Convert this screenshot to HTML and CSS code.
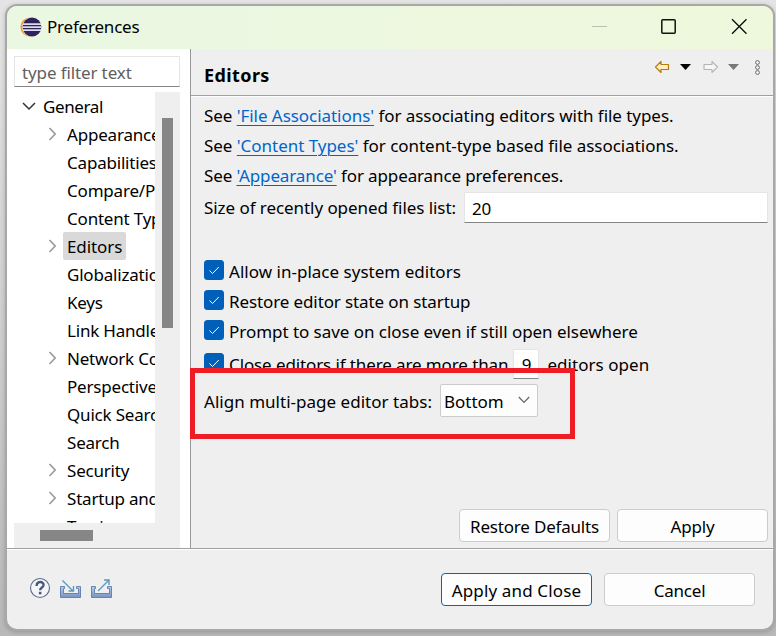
FILE: index.html
```html
<!DOCTYPE html>
<html lang="en">
<head>
<meta charset="utf-8">
<title>Preferences</title>
<link rel="stylesheet" href="styles.css">
</head>
<body>
<div class="window">
  <header class="titlebar">
    <svg class="logo" width="22" height="22" viewBox="0 0 22 22"><circle cx="10" cy="11" r="9.6" fill="#f09a35"/><circle cx="12" cy="11" r="9.9" fill="#ecf8e0"/><circle cx="12" cy="11" r="9.4" fill="#30235b"/><path d="M3 8.1h18M2.6 11.1h18.8M3 14.1h18" stroke="#dcdcec" stroke-width="1.6"/></svg>
    <span class="title">Preferences</span>
    <svg class="controls" width="160" height="20" viewBox="0 0 160 20"><path d="M2 9.5h15" stroke="#b8c2b0"/><rect x="71.8" y="2.8" width="13.4" height="13.4" rx="1" fill="none" stroke="#111" stroke-width="1.5"/><path d="M142 2.3l14.5 14.5M156.500 2.300l-14.500 14.500" stroke="#111" stroke-width="1.4"/></svg>
  </header>
  <div class="main">
    <aside class="sidebar">
      <div class="filter">type filter text</div>
      <div class="tree">
        <ul class="items">
          <li class="root"><svg width="14" height="10" viewBox="0 0 14 10"><path d="M1 2l6 6 6-6" fill="none" stroke="#333" stroke-width="1.5"/></svg><span class="label">General</span></li>
          <li><svg width="9" height="14" viewBox="0 0 9 14"><path d="M1.500 1l5.700 6-5.700 6" fill="none" stroke="#999" stroke-width="1.600"/></svg><span class="label">Appearance</span></li>
          <li><span class="label">Capabilities</span></li>
          <li><span class="label">Compare/Patch</span></li>
          <li><span class="label">Content Types</span></li>
          <li><svg width="9" height="14" viewBox="0 0 9 14"><path d="M1.500 1l5.700 6-5.700 6" fill="none" stroke="#999" stroke-width="1.600"/></svg><span class="label selected">Editors</span></li>
          <li><span class="label">Globalization</span></li>
          <li><span class="label">Keys</span></li>
          <li><span class="label">Link Handlers</span></li>
          <li><svg width="9" height="14" viewBox="0 0 9 14"><path d="M1.500 1l5.700 6-5.700 6" fill="none" stroke="#999" stroke-width="1.600"/></svg><span class="label">Network Connections</span></li>
          <li><span class="label">Perspectives</span></li>
          <li><span class="label">Quick Search</span></li>
          <li><span class="label">Search</span></li>
          <li><svg width="9" height="14" viewBox="0 0 9 14"><path d="M1.500 1l5.700 6-5.700 6" fill="none" stroke="#999" stroke-width="1.600"/></svg><span class="label">Security</span></li>
          <li><svg width="9" height="14" viewBox="0 0 9 14"><path d="M1.500 1l5.700 6-5.700 6" fill="none" stroke="#999" stroke-width="1.600"/></svg><span class="label">Startup and Shutdown</span></li>
          <li><span class="label">Tracing</span></li>
        </ul>
        <div class="vtrack"><div class="vthumb"></div></div>
        <div class="htrack"><div class="hthumb"></div></div>
      </div>
    </aside>
    <section class="page">
      <div class="pagehead">
        <h1>Editors</h1>
        <svg width="110" height="18" viewBox="0 0 110 18"><defs><linearGradient id="gold" x2="0" y2="1"><stop stop-color="#fffbe0"/><stop offset="1" stop-color="#fbe6a2"/></linearGradient></defs><path d="M1.500 9l5.500-5.500v3h7.500v5H7v3z" fill="url(#gold)" stroke="#b57a14" stroke-width="1.200" stroke-linejoin="round"/><path d="M26 6h11l-5.500 6z" fill="#000"/><path d="M63.500 9L58 3.500v3h-8v5h8v3z" fill="#f6f6f6" stroke="#b5b5b5" stroke-width="1.100" stroke-linejoin="round"/><path d="M74 6h11l-5.500 6z" fill="#77777d"/><g fill="#f8f8f8" stroke="#666" stroke-width="1"><circle cx="103.500" cy="4.500" r="1.900"/><circle cx="103.500" cy="9.500" r="1.900"/><circle cx="103.500" cy="14.500" r="1.900"/></g></svg>
      </div>
      <div class="form">
        <p class="l1">See <a>'File Associations'</a> for associating editors with file types.</p>
        <p class="l2">See <a>'Content Types'</a> for content-type based file associations.</p>
        <p class="l3">See <a>'Appearance'</a> for appearance preferences.</p>
        <div class="size"><span class="l4">Size of recently opened files list:</span><div class="field wide">20</div></div>
        <div class="checks">
          <div class="check"><svg width="20" height="20" viewBox="0 0 20 20"><rect width="20" height="20" rx="3.500" fill="#005fb8"/><path d="M5.500 10.500l3 3 6.300-6.500" fill="none" stroke="#fff" stroke-width="1"/></svg><span class="c1">Allow in-place system editors</span></div>
          <div class="check"><svg width="20" height="20" viewBox="0 0 20 20"><rect width="20" height="20" rx="3.500" fill="#005fb8"/><path d="M5.500 10.500l3 3 6.300-6.500" fill="none" stroke="#fff" stroke-width="1"/></svg><span class="c2">Restore editor state on startup</span></div>
          <div class="check"><svg width="20" height="20" viewBox="0 0 20 20"><rect width="20" height="20" rx="3.500" fill="#005fb8"/><path d="M5.500 10.500l3 3 6.300-6.500" fill="none" stroke="#fff" stroke-width="1"/></svg><span class="c3">Prompt to save on close even if still open elsewhere</span></div>
          <div class="check last"><svg width="20" height="20" viewBox="0 0 20 20"><rect width="20" height="20" rx="3.500" fill="#005fb8"/><path d="M5.500 10.500l3 3 6.300-6.500" fill="none" stroke="#fff" stroke-width="1"/></svg><span class="c4">Close editors if there are more than</span><div class="field small">9</div><span class="c5">editors open</span></div>
        </div>
        <div class="align"><span class="c6">Align multi-page editor tabs:</span><div class="select"><span>Bottom</span><svg width="12" height="8" viewBox="0 0 12 8"><path d="M.8 1l5.200 5.500L11.200 1" fill="none" stroke="#666" stroke-width="1.200"/></svg></div></div>
        <div class="actions"><button class="btn b1">Restore Defaults</button><button class="btn">Apply</button></div>
      </div>
    </section>
  </div>
  <footer class="footer">
    <svg width="86" height="24" viewBox="0 0 86 24"><defs><linearGradient id="tray" x2="0" y2="1"><stop stop-color="#b9cde6"/><stop offset="1" stop-color="#7593c4"/></linearGradient></defs><circle cx="11" cy="12" r="9.500" fill="#f3f5f9" stroke="#5c6d8a" stroke-width="1.100"/><path d="M7.600 10c0-5.300 7-5 7-1 0 2.600-3.500 2.400-3.500 5.300" fill="none" stroke="#46597b" stroke-width="2.300"/><rect x="9.900" y="15.800" width="2.500" height="2.500" fill="#46597b"/><g fill="url(#tray)" stroke="#6583b5" stroke-width="1"><path d="M31.500 10.500h4v2h-1v5h15v-5h-2v-2h4v11h-20z"/><path d="M62.500 10.500h4v2h-1v5h15v-5h-2v-2h4v11h-20z"/></g><g fill="none" stroke="#5b9abb" stroke-width="1.400"><path d="M33.500 4.500l10 10M44.500 10v5h-5"/><path d="M69 15L79.500 4.500M75 4h5v5"/></g></svg>
    <div class="closing"><button class="btn b2">Apply and Close</button><button class="btn">Cancel</button></div>
  </footer>
</div>
<div class="highlight"></div>
</body>
</html>
```
FILE: styles.css
```css
* { box-sizing: border-box; }
body {
  margin: 0;
  width: 776px;
  height: 636px;
  padding: 4px 1px 5px 5px;
  overflow: hidden;
  background: linear-gradient(#e4e4e4, #cfcfcf 50%, #b8b8b8);
  font-family: "Noto Sans", sans-serif;
  font-size: 17px;
  line-height: 28px;
  letter-spacing: -0.2px;
  color: #000;
  white-space: nowrap;
}
.window {
  height: 627px;
  border: 2px solid #a8a8a8;
  border-radius: 12px;
  background: #efefef;
  overflow: hidden;
  display: flex;
  flex-direction: column;
  box-shadow: 0 1px 4px rgba(0, 0, 0, .2);
}
.titlebar {
  height: 43px;
  flex: none;
  display: flex;
  align-items: center;
  padding-left: 13px;
  background: linear-gradient(90deg, #eaf7e2, #eff8dc);
}
.logo { margin-top: -1px; }
.title { margin: -2px 0 0 5px; }
.controls { margin: -1px 23px 0 auto; }
.main { height: 499px; flex: none; display: flex; }
.sidebar {
  width: 184px;
  flex: none;
  padding: 7px 10px 0 7px;
  background: #fff;
  border-right: 1px solid #999;
  display: flex;
  flex-direction: column;
}
.filter {
  height: 31px;
  padding-left: 7px;
  line-height: 31px;
  letter-spacing: -.12px;
  color: #606060;
  border: 1px solid #e5e5e5;
  border-bottom-color: #858585;
}
.tree {
  margin-top: 5px;
  flex: 1;
  min-height: 0;
  display: grid;
  grid-template: 431px 1fr / 141px 1fr;
}
.items { margin: 0; padding: 0; list-style: none; overflow: hidden; }
.items li { height: 28px; display: flex; align-items: center; padding-left: 49px; }
.items li:has(svg) { padding-left: 34px; }
.items li.root { padding-left: 8px; }
.items svg { flex: none; }
.label { margin-left: 4px; height: 28px; line-height: 30px; }
svg + .label { margin-left: 10px; }
.root svg + .label { margin-left: 7px; letter-spacing: -.4px; }
svg + .selected { margin-left: 6px; padding: 0 4px; background: #d9d9d9; border-radius: 2px; letter-spacing: -.1px; }
.vtrack { background: #efefef; padding: 26px 0 0 7px; }
.vthumb { width: 11px; height: 210px; background: #868686; }
.htrack { grid-column: 1 / 3; background: #efefef; padding: 7px 0 0 26px; }
.hthumb { width: 53px; height: 11px; background: #868686; }
.page { flex: 1; display: flex; flex-direction: column; }
.pagehead {
  height: 47px;
  padding: 0 9px 0 13px;
  display: flex;
  align-items: flex-start;
  justify-content: space-between;
  border-bottom: 1px solid #a0a0a0;
  box-shadow: 0 1px #fff;
}
.pagehead svg { margin-top: 9px; }
h1 { margin: 12px 0 0; font-size: 18px; line-height: 28px; font-weight: 700; letter-spacing: .4px; }
.form { flex: 1; padding: 5px 5px 6px 13px; display: flex; flex-direction: column; }
p { margin: 0; height: 30px; line-height: 30px; }
.l1 { letter-spacing: -.05px; }
.l2 { letter-spacing: -.03px; }
.l3 { letter-spacing: -.12px; }
.l4 { letter-spacing: -.06px; line-height: 30px; }
.c1, .c6 { letter-spacing: .02px; }
.c2, .c4 { letter-spacing: -.11px; }
.c3 { letter-spacing: -.04px; }
.c5 { letter-spacing: .05px; }
a { color: #0066cc; text-decoration: underline; text-decoration-thickness: 1px; text-underline-offset: 3px; }
.size { display: flex; height: 32px; margin-top: 1px; align-items: center; justify-content: space-between; }
.field { background: #fff; border: 1px solid #e5e5e5; border-bottom-color: #858585; }
.wide { width: 304px; height: 31px; margin-top: -1px; padding-left: 7px; line-height: 31px; }
.checks { margin-top: 32px; }
.check { height: 30px; display: flex; align-items: center; }
.check > svg { margin: -2px 5px 0 0; }
.check > span { height: 28px; line-height: 30px; }
.last { height: 36px; }
.small { width: 26px; height: 30px; line-height: 30px; text-align: center; margin: -1px 8px 0 5px; }
.align { height: 34px; margin-top: 1px; display: flex; align-items: center; }
.align span { height: 28px; line-height: 31px; }
.select {
  width: 98px; height: 33px; margin-left: 8px; padding: 0 7px 0 3px;
  border: 1px solid #ccc; border-radius: 2px; background: #fdfdfd; letter-spacing: 0;
  display: flex; align-items: center; justify-content: space-between;
}
.actions { display: flex; gap: 7px; justify-content: flex-end; margin-top: auto; }
.btn {
  width: 151px; height: 33px; padding: 2px 0 0;
  border: 1px solid #ccc; border-radius: 4px; background: #fdfdfd;
  font: inherit; letter-spacing: -.2px; color: #000;
}
.btn.b2 { letter-spacing: .15px; border-color: #0067c0; }
.footer {
  flex: 1;
  border-top: 1px solid #a0a0a0;
  box-shadow: inset 0 1px #fff;
  padding: 24px 18px 0 22px;
  display: flex;
  align-items: flex-start;
  justify-content: space-between;
}
.footer > svg { margin-top: 3px; }
.closing { display: flex; gap: 12px; }
.highlight {
  position: absolute;
  left: 190px;
  top: 368px;
  width: 385px;
  height: 71px;
  border: 5px solid #ee1c25;
}
```
